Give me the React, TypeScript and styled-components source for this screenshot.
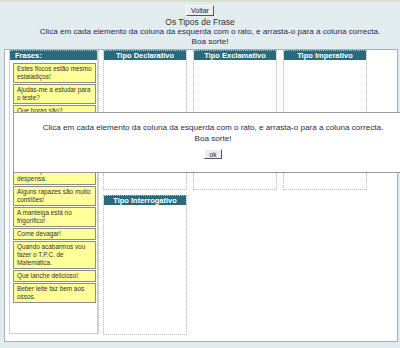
import React from 'react';
import styled, { createGlobalStyle } from 'styled-components';

const GlobalStyle = createGlobalStyle`
  html, body {
    margin: 0;
    padding: 0;
    background: #e2ebee;
    font-family: 'Liberation Sans', Arial, sans-serif;
  }
`;

const Page = styled.div`
  position: relative;
  width: 400px;
  height: 348px;
  overflow: hidden;
  border-top: 2px solid #d9e0cf;
  box-sizing: border-box;
`;

const Top = styled.div`
  display: flex;
  flex-direction: column;
  align-items: center;
  padding-top: 3px;
`;

const SmallButton = styled.button`
  font-family: 'Liberation Sans', Arial, sans-serif;
  font-size: 7px;
  line-height: 7px;
  color: #222;
  background: #ececec;
  border: 1px solid;
  border-color: #fff #555 #555 #fff;
  padding: 1px 4px;
  margin: 0;
  height: 11px;
  cursor: pointer;
`;

const Title = styled.div`
  margin-top: 1px;
  font-size: 8.5px;
  line-height: 10px;
  color: #333;
`;

const Instructions = styled.div`
  padding-left: 20px;
  text-align: center;
  font-size: 8.1px;
  line-height: 10px;
  color: #2a2a48;
`;

const Panel = styled.div`
  margin: 2px 2px 0 4px;
  height: 293px;
  box-sizing: border-box;
  background: #fff;
  border: 1px solid #9fb3bd;
  padding: 0 0 0 4px;
  display: flex;
  align-items: flex-start;
`;

const SourceColumn = styled.div`
  width: 90px;
  height: 284px;
  box-sizing: border-box;
  border: 1px solid #cfcfcf;
  border-right-width: 2px;
  border-top: none;
  display: flex;
  flex-direction: column;
`;

const ColumnHeader = styled.div<{ $left?: boolean }>`
  background: #2b6a7c;
  color: #fff;
  font-weight: bold;
  font-size: 7.5px;
  line-height: 9px;
  height: 9px;
  text-align: ${p => (p.$left ? 'left' : 'center')};
  padding-left: ${p => (p.$left ? '5px' : '0')};
  border-top: 1px dotted #9cc;
  white-space: nowrap;
`;

const ItemList = styled.div`
  display: flex;
  flex-direction: column;
  gap: 1px;
  padding: 3px 1px 0 3px;
`;

const Item = styled.div`
  background: #ffff99;
  border: 1px solid #8c8c8c;
  padding: 1px 3px;
  font-size: 6.4px;
  line-height: 8px;
  color: #333;
`;

const Targets = styled.div`
  flex: 1;
  display: flex;
  flex-wrap: wrap;
  row-gap: 5px;
  padding-left: 1px;
`;

const TargetColumn = styled.div`
  width: 84px;
  height: 140px;
  margin: 0 3px;
  box-sizing: border-box;
  border: 1px dotted #b8b8b8;
  border-top: none;
`;

const Modal = styled.div`
  position: absolute;
  left: 13px;
  top: 110px;
  width: 400px;
  height: 61px;
  box-sizing: border-box;
  background: #fff;
  border: 1px solid #9a9a9a;
  display: flex;
  flex-direction: column;
  align-items: center;
  padding-top: 9px;
  color: #2a2a48;
  font-size: 8.1px;
  line-height: 11px;
  text-align: center;
`;

const OkButton = styled(SmallButton)`
  margin-top: 5px;
  height: 10px;
  padding: 0 5px;
  font-size: 6.5px;
`;

const phrases = [
  'Estes flocos estão mesmo estaladiços!',
  'Ajudas-me a estudar para o teste?',
  'Que horas são?',
  'O meu irmão joga futebol na escola.',
  'Fecha a janela.',
  'Que dia lindo!',
  'Tira um pacote da despensa.',
  'Alguns rapazes são muito comilões!',
  'A manteiga está no frigorífico!',
  'Come devagar!',
  'Quando acabarmos vou fazer o T.P.C. de Matemática.',
  'Que lanche delicioso!',
  'Beber leite faz bem aos ossos.',
];

const targets = ['Tipo Declarativo', 'Tipo Exclamativo', 'Tipo Imperativo', 'Tipo Interrogativo'];

const App: React.FC = () => {
  return (
    <Page>
      <GlobalStyle />
      <Top>
        <SmallButton>Voltar</SmallButton>
        <Title>Os Tipos de Frase</Title>
      </Top>
      <Instructions>
        Clica em cada elemento da coluna da esquerda com o rato, e arrasta-o para a coluna correcta.
        <br />
        Boa sorte!
      </Instructions>
      <Panel>
        <SourceColumn>
          <ColumnHeader $left>Frases:</ColumnHeader>
          <ItemList>
            {phrases.map(p => (
              <Item key={p}>{p}</Item>
            ))}
          </ItemList>
        </SourceColumn>
        <Targets>
          {targets.map(t => (
            <TargetColumn key={t}>
              <ColumnHeader>{t}</ColumnHeader>
            </TargetColumn>
          ))}
        </Targets>
      </Panel>
      <Modal>
        <div>Clica em cada elemento da coluna da esquerda com o rato, e arrasta-o para a coluna correcta.</div>
        <div>Boa sorte!</div>
        <OkButton>ok</OkButton>
      </Modal>
    </Page>
  );
};

export default App;
